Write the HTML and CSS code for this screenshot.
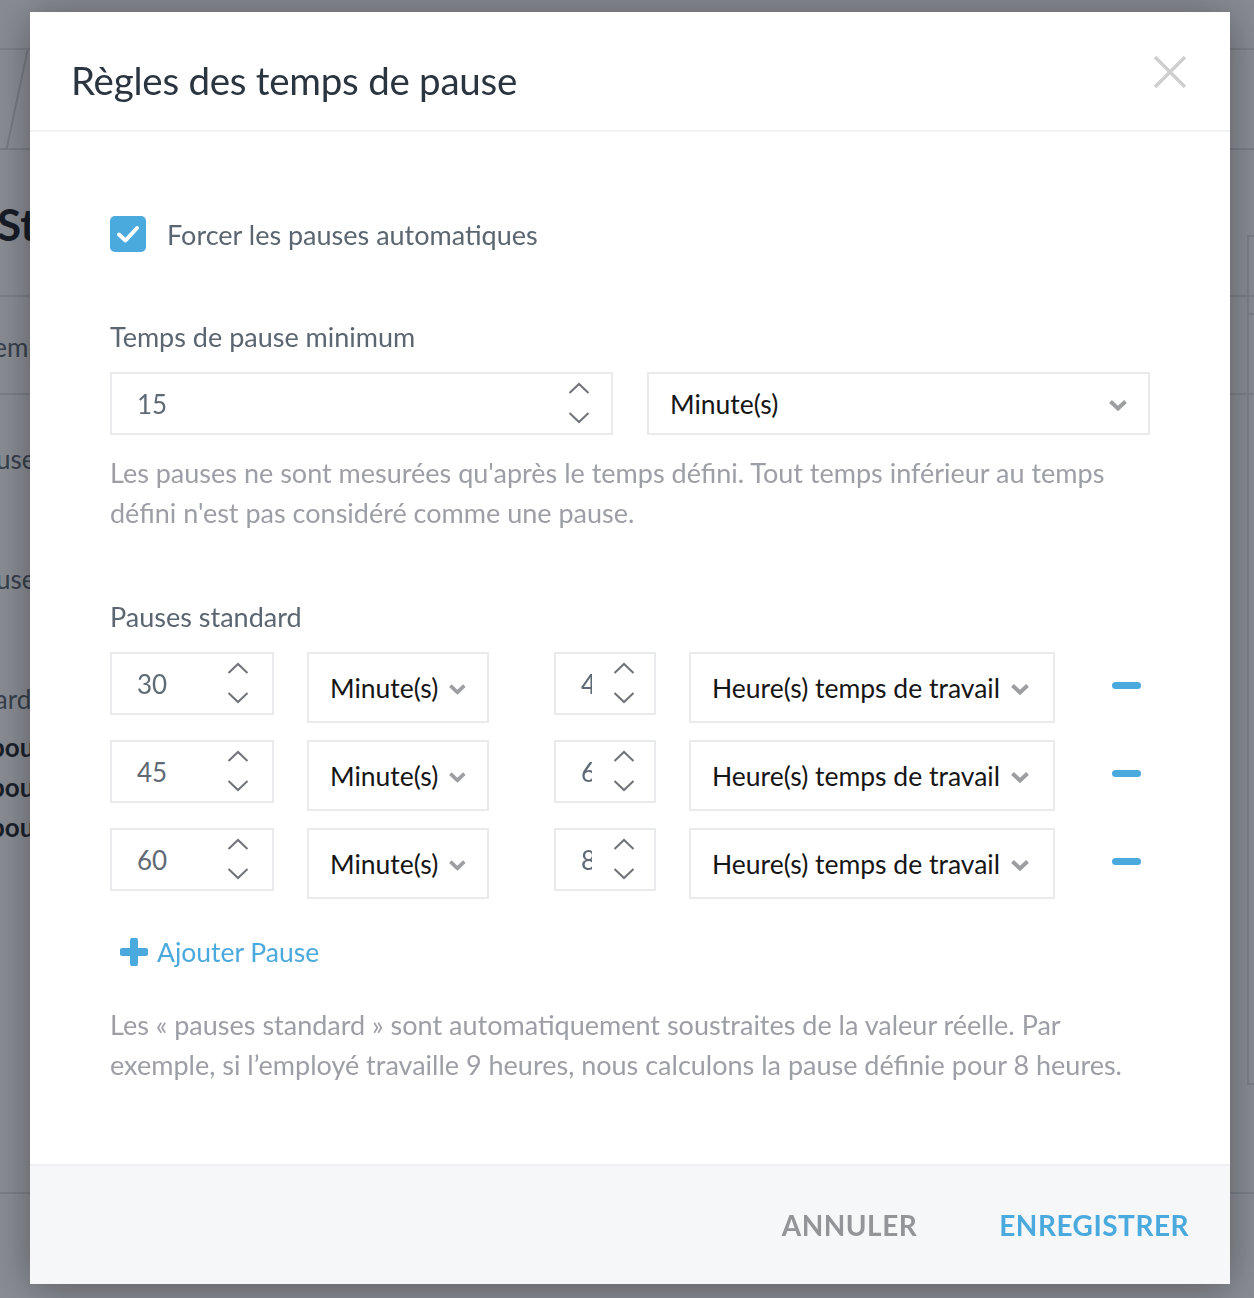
FILE: index.html
```html
<!DOCTYPE html>
<html lang="fr">
<head>
    <meta charset="UTF-8">
    <meta name="viewport" content="width=device-width, initial-scale=1.0">
    <title>Règles des temps de pause</title>
    <link rel="stylesheet" href="styles.css">
</head>
<body>
    <!-- page behind the dialog -->
    <div class="page">
        <div class="topbar"></div>
        <div class="subbar"><span class="crumb-sep"></span></div>
        <h2 class="page-title">Statistiques</h2>
        <div class="page-row"><span class="shift-a">Temps</span></div>
        <div class="page-list">
            <p class="shift-b">Pauses</p>
            <p class="shift-b">Pauses</p>
            <p class="shift-c">Standard</p>
            <p class="strong shift-d">pour</p>
            <p class="strong shift-d">pour</p>
            <p class="strong shift-d">pour</p>
        </div>
        <div class="side-card"><div class="side-card-head"></div></div>
        <div class="page-bottom"></div>
    </div>

    <div class="overlay">
        <div class="modal">
            <div class="modal-header">
                <h1>Règles des temps de pause</h1>
                <button class="close-btn" aria-label="Fermer">
                    <svg width="34" height="34" viewBox="0 0 34 34"><path d="M2 2 L32 32 M32 2 L2 32" stroke="#cfcfcf" stroke-width="3.5" fill="none"/></svg>
                </button>
            </div>

            <div class="modal-body">
                <label class="check-row">
                    <span class="checkbox">
                        <svg width="24" height="20" viewBox="0 0 24 20"><path d="M3 10.5 L9.5 16.5 L21 4" stroke="#fff" stroke-width="4" fill="none" stroke-linecap="round" stroke-linejoin="round"/></svg>
                    </span>
                    <span class="check-text">Forcer les pauses automatiques</span>
                </label>

                <div class="field-label">Temps de pause minimum</div>
                <div class="min-row">
                    <div class="num-input min-num">
                        <span class="num-value">15</span>
                        <span class="spinner">
                            <svg width="22" height="12" viewBox="0 0 22 12"><path d="M1.5 11 L11 2 L20.5 11" stroke="#707479" stroke-width="2" fill="none"/></svg>
                            <svg width="22" height="12" viewBox="0 0 22 12"><path d="M1.5 1 L11 10 L20.5 1" stroke="#707479" stroke-width="2" fill="none"/></svg>
                        </span>
                    </div>
                    <div class="select min-select">
                        <span class="select-text">Minute(s)</span>
                        <svg class="caret" width="20" height="12" viewBox="0 0 20 12"><path d="M2.5 2.5 L10 9.5 L17.5 2.5" stroke="#9c9ea2" stroke-width="4" fill="none"/></svg>
                    </div>
                </div>
                <p class="help">Les pauses ne sont mesurées qu'après le temps défini. Tout temps inférieur au temps défini n'est pas considéré comme une pause.</p>

                <div class="field-label standard-label">Pauses standard</div>
                <div class="pause-list" id="pauseList"></div>

                <a class="add-link" href="#">
                    <svg width="28" height="28" viewBox="0 0 28 28"><path d="M14 3 V25 M3 14 H25" stroke="#4aa9dd" stroke-width="8" stroke-linecap="round" fill="none"/></svg>
                    Ajouter Pause
                </a>

                <p class="help help-standard">Les « pauses standard » sont automatiquement soustraites de la valeur réelle. Par exemple, si l’employé travaille 9 heures, nous calculons la pause définie pour 8 heures.</p>
            </div>

            <div class="modal-footer">
                <button class="btn-cancel">ANNULER</button>
                <button class="btn-save">ENREGISTRER</button>
            </div>
        </div>
    </div>

    <script>
        // standard breaks: duration + threshold in worked hours
        const pauses = [
            { minutes: 30, hours: 4 },
            { minutes: 45, hours: 6 },
            { minutes: 60, hours: 8 }
        ];

        const up = '<svg width="22" height="12" viewBox="0 0 22 12"><path d="M1.5 11 L11 2 L20.5 11" stroke="#707479" stroke-width="2" fill="none"/></svg>';
        const down = '<svg width="22" height="12" viewBox="0 0 22 12"><path d="M1.5 1 L11 10 L20.5 1" stroke="#707479" stroke-width="2" fill="none"/></svg>';
        const caret = '<svg class="caret" width="20" height="12" viewBox="0 0 20 12"><path d="M2.5 2.5 L10 9.5 L17.5 2.5" stroke="#9c9ea2" stroke-width="4" fill="none"/></svg>';

        const list = document.getElementById('pauseList');
        pauses.forEach(p => {
            const row = document.createElement('div');
            row.className = 'pause-row';
            row.innerHTML =
                '<div class="num-input row-num"><span class="num-value">' + p.minutes + '</span><span class="spinner">' + up + down + '</span></div>' +
                '<div class="select row-unit"><span class="select-text">Minute(s)</span>' + caret + '</div>' +
                '<div class="num-input row-hours"><span class="num-value">' + p.hours + '</span><span class="spinner">' + up + down + '</span></div>' +
                '<div class="select row-basis"><span class="select-text">Heure(s) temps de travail</span>' + caret + '</div>' +
                '<button class="remove-btn" aria-label="Supprimer"><span></span></button>';
            list.appendChild(row);
        });
    </script>
</body>
</html>
```

FILE: styles.css
```css
* {
    margin: 0;
    padding: 0;
    box-sizing: border-box;
}

body {
    font-family: Lato, 'Liberation Sans', sans-serif;
    background: #fff;
    width: 1254px;
    height: 1298px;
    overflow: hidden;
}

/* ---- page underneath ---- */

.page {
    position: relative;
    height: 1298px;
    overflow: hidden;
    color: #2a2f36;
}

.topbar {
    height: 50px;
    border-bottom: 2px solid #e4e5e8;
    background: #fdfdfd;
}

.subbar {
    position: relative;
    height: 100px;
    border-bottom: 2px solid #dfe1e4;
}

.crumb-sep {
    position: absolute;
    left: 16px;
    top: 0;
    width: 2px;
    height: 100px;
    background: #d8dadd;
    transform: skewX(-12deg);
}

.page-title {
    font-size: 44px;
    font-weight: 700;
    line-height: 60px;
    margin-top: 44px;
    margin-left: -3px;
    color: #1a1e24;
}

.page-row {
    margin-top: 41px;
    border-top: 2px solid #e4e5e8;
    border-bottom: 2px solid #e4e5e8;
    height: 100px;
    font-size: 26px;
    line-height: 100px;
    color: #5b6671;
}

.page-list p {
    font-size: 26px;
    color: #5b6671;
}

.shift-a { margin-left: -19px; }

.page-list .shift-b {
    margin-left: -32px;
    line-height: 40px;
    margin-top: 44px;
}

.page-list .shift-b + .shift-b { margin-top: 80px; }

.page-list .shift-c {
    margin-left: -70px;
    line-height: 40px;
    margin-top: 80px;
}

.page-list .strong {
    font-weight: 700;
    color: #1f252c;
    line-height: 40px;
}

.page-list .shift-c + .strong { margin-top: 8px; }

.shift-d { margin-left: -10px; }

.side-card {
    position: absolute;
    left: 1247px;
    top: 235px;
    width: 300px;
    height: 850px;
    border: 2px solid #e2e3e6;
}

.side-card-head {
    height: 78px;
    border-bottom: 2px solid #e2e3e6;
}

.page-bottom {
    position: absolute;
    left: 0;
    right: 0;
    top: 1192px;
    border-top: 2px solid #e2e3e6;
}

/* ---- dialog ---- */

.overlay {
    position: fixed;
    inset: 0;
    background: rgba(21, 27, 41, 0.5);
    padding: 12px 0 0 30px;
}

.modal {
    width: 1200px;
    height: 1272px;
    background: #fff;
    box-shadow: 0 4px 40px rgba(0, 0, 0, 0.35);
    display: flex;
    flex-direction: column;
}

.modal-header {
    height: 120px;
    flex-shrink: 0;
    border-bottom: 2px solid #f1f2f3;
    display: flex;
    align-items: center;
    justify-content: space-between;
    padding: 18px 43px 0 41px;
}

.modal-header h1 {
    font-size: 38.5px;
    font-weight: 400;
    letter-spacing: -0.25px;
    color: #2b3540;
}

.close-btn {
    background: none;
    border: none;
    cursor: pointer;
    display: flex;
    margin-top: -16px;
}

.modal-body {
    flex: 1;
    padding: 84px 80px 0 80px;
}

.check-row {
    display: flex;
    align-items: center;
    gap: 21px;
    cursor: pointer;
}

.checkbox {
    width: 36px;
    height: 36px;
    border-radius: 5px;
    background: #4aa9dd;
    display: flex;
    align-items: center;
    justify-content: center;
}

.check-text {
    font-size: 27px;
    color: #5b6671;
}

.field-label {
    font-size: 27px;
    line-height: 40px;
    color: #5b6671;
    margin-top: 65px;
    margin-bottom: 15px;
}

.standard-label {
    margin-top: 64px;
}

.min-row {
    display: flex;
    gap: 34px;
}

.num-input,
.select {
    border: 2px solid #e9eaeb;
    background: #fff;
    display: flex;
    align-items: center;
}

.num-input {
    height: 63px;
    padding-left: 25px;
}

.num-value {
    font-size: 26px;
    color: #5f6a75;
    flex: 1;
    overflow: hidden;
    white-space: nowrap;
}

.spinner {
    display: flex;
    flex-direction: column;
    gap: 18px;
    margin-top: -2px;
}

.min-num {
    width: 503px;
    padding-right: 21px;
}

.select {
    padding-left: 21px;
    padding-right: 20px;
}

.select-text {
    font-size: 26.5px;
    color: #161616;
}

.caret {
    margin-left: 10px;
    margin-top: 2px;
}

.min-select {
    width: 503px;
    height: 63px;
    justify-content: space-between;
}

.help {
    font-size: 27px;
    line-height: 40px;
    color: #9ca0a6;
    margin-top: 18px;
}

.pause-list {
    display: flex;
    flex-direction: column;
    gap: 17px;
}

.pause-row {
    display: flex;
    align-items: flex-start;
}

.row-num {
    width: 164px;
    padding-right: 23px;
}

.row-unit {
    width: 182px;
    height: 71px;
    margin-left: 33px;
}

.row-hours {
    width: 102px;
    margin-left: 65px;
    padding-right: 21px;
}

.row-hours .num-value {
    flex: 0 0 11px;
    margin-right: 21px;
}

.row-basis {
    width: 366px;
    height: 71px;
    margin-left: 33px;
}

.remove-btn {
    margin-left: 57px;
    margin-top: 30px;
    background: none;
    border: none;
    cursor: pointer;
}

.remove-btn span {
    display: block;
    width: 29px;
    height: 7px;
    border-radius: 4px;
    background: #4aa9dd;
}

.add-link {
    display: inline-flex;
    align-items: center;
    gap: 9px;
    margin-top: 33px;
    margin-left: 10px;
    font-size: 26.5px;
    line-height: 40px;
    color: #4aa9dd;
    text-decoration: none;
}

.help-standard {
    margin-top: 33px;
}

.modal-footer {
    height: 120px;
    flex-shrink: 0;
    background: #f6f7f9;
    border-top: 2px solid #eff0f2;
    display: flex;
    align-items: center;
    justify-content: flex-end;
    gap: 82px;
    padding-right: 41px;
}

.modal-footer button {
    background: none;
    border: none;
    font-family: inherit;
    font-size: 28px;
    font-weight: 700;
    letter-spacing: 0.5px;
    cursor: pointer;
}

.btn-cancel {
    color: #939599;
}

.btn-save {
    color: #4aa9dd;
}
```
